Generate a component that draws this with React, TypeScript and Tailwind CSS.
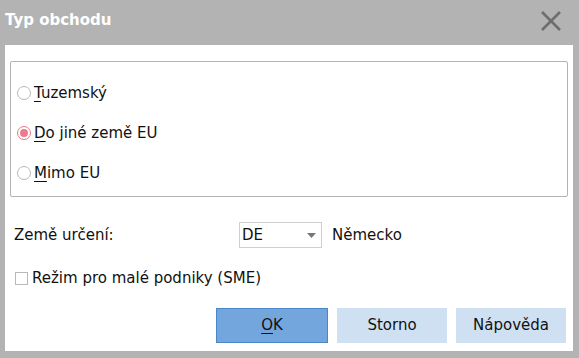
import React, { useState } from "react";

function Radio({ checked }: { checked: boolean }) {
  return checked ? (
    <span className="w-[14px] h-[14px] rounded-full border border-[#e8788a] flex items-center justify-center shrink-0">
      <span className="w-[8px] h-[8px] rounded-full bg-[#ee7b8d]" />
    </span>
  ) : (
    <span className="w-[14px] h-[14px] rounded-full border border-[#b8b8b8] bg-white shrink-0" />
  );
}

export default function App() {
  const [trade, setTrade] = useState("eu");
  const [sme, setSme] = useState(false);

  const options = [
    { id: "cz", key: "T", rest: "uzemský" },
    { id: "eu", key: "D", rest: "o jiné země EU" },
    { id: "out", key: "M", rest: "imo EU" },
  ];

  return (
    <div
      className="w-[579px] h-[358px] bg-[#b3b3b3] flex flex-col text-[15px] text-[#111]"
      style={{ fontFamily: "Tahoma, 'DejaVu Sans', sans-serif" }}
    >
      <div className="h-[45px] flex items-center justify-between pl-[5px] pr-[17px] shrink-0">
        <span className="text-white font-bold text-[15px] pb-[5px]">Typ obchodu</span>
        <svg width="22" height="22" viewBox="0 0 22 22" className="mb-[4px]">
          <path d="M2 2 L20 20 M20 2 L2 20" stroke="#6e6e6e" strokeWidth="2.6" />
        </svg>
      </div>

      <div className="flex-1 bg-white ml-[5px] mr-[6px] mb-[7px] flex flex-col px-[5px]">
        <div className="mt-[16px] h-[136px] border border-[#b4b4b4] rounded-[2px] flex flex-col pt-[19px] gap-[16px]">
          {options.map((o) => (
            <div
              key={o.id}
              className="h-[24px] flex items-center gap-[3px] pl-[6px] cursor-default"
              onClick={() => setTrade(o.id)}
            >
              <Radio checked={trade === o.id} />
              <span>
                <span className="underline underline-offset-[3px]">{o.key}</span>
                {o.rest}
              </span>
            </div>
          ))}
        </div>

        <div className="mt-[25px] h-[26px] flex items-center">
          <span className="w-[229px] pl-[4px]">Země určení:</span>
          <div className="w-[83px] h-[26px] border border-[#cfcfcf] flex items-center justify-between pl-[2px] pr-[5px]">
            <span>DE</span>
            <svg width="9" height="5" viewBox="0 0 9 5">
              <path d="M0 0 L9 0 L4.5 5 Z" fill="#777" />
            </svg>
          </div>
          <span className="ml-[10px]">Německo</span>
        </div>

        <div className="mt-[19px] flex items-center gap-[4px] pl-[5px]" onClick={() => setSme(!sme)}>
          <span className="w-[13px] h-[13px] border border-[#b8b8b8] bg-white shrink-0" />
          <span>Režim pro malé podniky (SME)</span>
        </div>

        <div className="mt-auto mb-[8px] flex justify-end gap-[9px] pr-[2px]">
          <button className="w-[112px] h-[35px] bg-[#74a6de] border border-[#4a86c8] text-[#111]">
            <span className="underline underline-offset-[3px]">O</span>K
          </button>
          <button className="w-[110px] h-[35px] bg-[#cfe0f3] text-[#111]">Storno</button>
          <button className="w-[110px] h-[35px] bg-[#cfe0f3] text-[#111]">Nápověda</button>
        </div>
      </div>
    </div>
  );
}
